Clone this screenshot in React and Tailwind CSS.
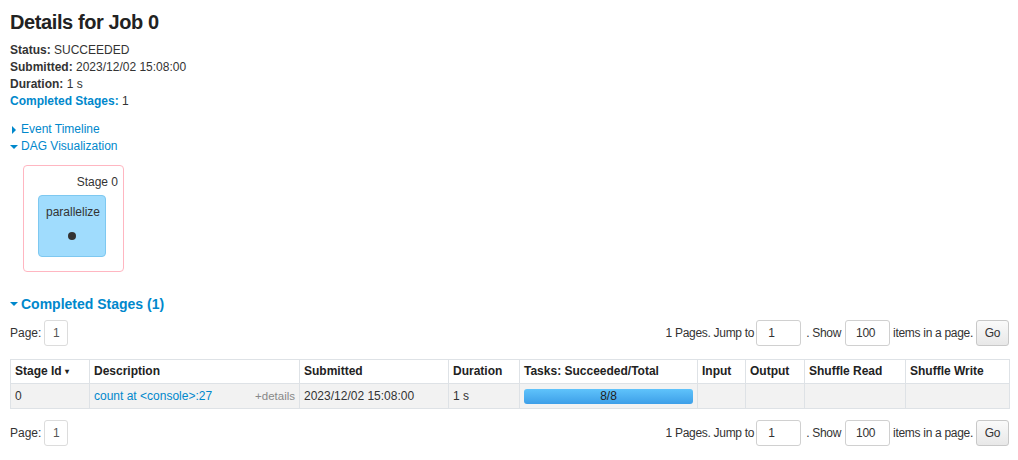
import React from "react";

const Tri = ({ open }) =>
  open ? (
    <svg width="8" height="8" viewBox="0 0 8 8" className="inline-block">
      <path d="M0 2 L8 2 L4 6 Z" fill="#0088cc" />
    </svg>
  ) : (
    <svg width="8" height="8" viewBox="0 0 8 8" className="inline-block">
      <path d="M2 0 L6 4 L2 8 Z" fill="#0088cc" />
    </svg>
  );

const Pager = () => (
  <div className="flex items-center justify-between h-[26px] w-[999px]">
    <div className="flex items-center">
      <span>Page:</span>
      <span className="ml-[3px] w-[24px] h-[26px] border border-[#dcdcdc] rounded-[3px] flex items-center justify-center text-[#555]">1</span>
    </div>
    <div className="flex items-center tracking-[-0.3px]">
      <span>1 Pages. Jump to</span>
      <span className="ml-[2px] w-[45px] h-[26px] border border-[#d0d0d0] rounded-[3px] flex items-center pl-[11px] text-[#333]">1</span>
      <span className="ml-[5px]">. Show</span>
      <span className="ml-[4px] w-[45px] h-[26px] border border-[#d0d0d0] rounded-[3px] flex items-center pl-[10px] text-[#333]">100</span>
      <span className="ml-[3px]">items in a page.</span>
      <span className="ml-[3px] w-[33px] h-[26px] border border-[#c8c8c8] rounded-[3px] flex items-center justify-center bg-gradient-to-b from-[#fafafa] to-[#e8e8e8] text-[#333]">Go</span>
    </div>
  </div>
);

export default function App() {
  const cols = [79, 210, 149, 71, 178, 48, 59, 101, 104];
  const heads = ["Stage Id", "Description", "Submitted", "Duration", "Tasks: Succeeded/Total", "Input", "Output", "Shuffle Read", "Shuffle Write"];
  return (
    <div className="bg-white w-[1018px] h-[460px] overflow-hidden px-[10px] text-[12px] text-[#333] font-['Liberation_Sans',Arial,sans-serif] leading-[17px]">
      <h3 className="text-[20px] font-bold leading-[24px] mt-[10px] text-[#222] tracking-[-0.4px]">Details for Job 0</h3>
      <div className="mt-[8px]">
        <div><b>Status:</b> SUCCEEDED</div>
        <div><b>Submitted:</b> 2023/12/02 15:08:00</div>
        <div><b>Duration:</b> 1 s</div>
        <div><b className="text-[#0088cc]">Completed Stages:</b> 1</div>
      </div>
      <div className="mt-[11px] text-[#0088cc]">
        <div className="flex items-center gap-[3px]"><Tri /> <span>Event Timeline</span></div>
        <div className="flex items-center gap-[3px]"><Tri open /> <span>DAG Visualization</span></div>
      </div>
      <div className="mt-[10px] ml-[13px] w-[101px] h-[107px] border border-[#ffb6c1] rounded-[4px] flex flex-col items-center">
        <div className="self-end pr-[5px] mt-[8px] leading-[16px]">Stage 0</div>
        <div className="mt-[5px] ml-[-4px] w-[68px] h-[62px] bg-[#a0dcfd] border border-[#7ec8f0] rounded-[4px] flex flex-col items-center">
          <div className="mt-[8px] leading-[16px] ml-[3px]">parallelize</div>
          <div className="mt-[12px] w-[8px] h-[8px] rounded-full bg-[#333]" />
        </div>
      </div>
      <div className="mt-[23px] flex items-center gap-[3px] text-[#0088cc]">
        <Tri open />
        <span className="text-[14px] font-bold leading-[18px]">Completed Stages (1)</span>
      </div>
      <div className="mt-[7px]"><Pager /></div>
      <table className="mt-[13px] table-fixed border-collapse w-[999px]">
        <colgroup>
          {cols.map((w, i) => <col key={i} style={{ width: w }} />)}
        </colgroup>
        <thead>
          <tr className="h-[24px]">
            {heads.map((h, i) => (
              <th key={i} className="border border-[#dee2e6] text-left font-bold px-[4px] py-0 text-[#222]">
                {h}{i === 0 && <span className="text-[8px] ml-[3px] align-middle">▾</span>}
              </th>
            ))}
          </tr>
        </thead>
        <tbody>
          <tr className="h-[25px] bg-[#f2f2f2]">
            <td className="border border-[#dee2e6] px-[4px]">0</td>
            <td className="border border-[#dee2e6] px-[4px]">
              <div className="flex justify-between">
                <span className="text-[#0088cc]">count at &lt;console&gt;:27</span>
                <span className="text-[#888] text-[11.5px]">+details</span>
              </div>
            </td>
            <td className="border border-[#dee2e6] px-[4px]">2023/12/02 15:08:00</td>
            <td className="border border-[#dee2e6] px-[4px]">1 s</td>
            <td className="border border-[#dee2e6] px-[4px]">
              <div className="h-[15px] rounded-[3px] bg-gradient-to-b from-[#5fc3fb] to-[#3d9fe8] flex items-center justify-center text-[#222] leading-[15px]">8/8</div>
            </td>
            <td className="border border-[#dee2e6]"></td>
            <td className="border border-[#dee2e6]"></td>
            <td className="border border-[#dee2e6]"></td>
            <td className="border border-[#dee2e6]"></td>
          </tr>
        </tbody>
      </table>
      <div className="mt-[11px]"><Pager /></div>
    </div>
  );
}
